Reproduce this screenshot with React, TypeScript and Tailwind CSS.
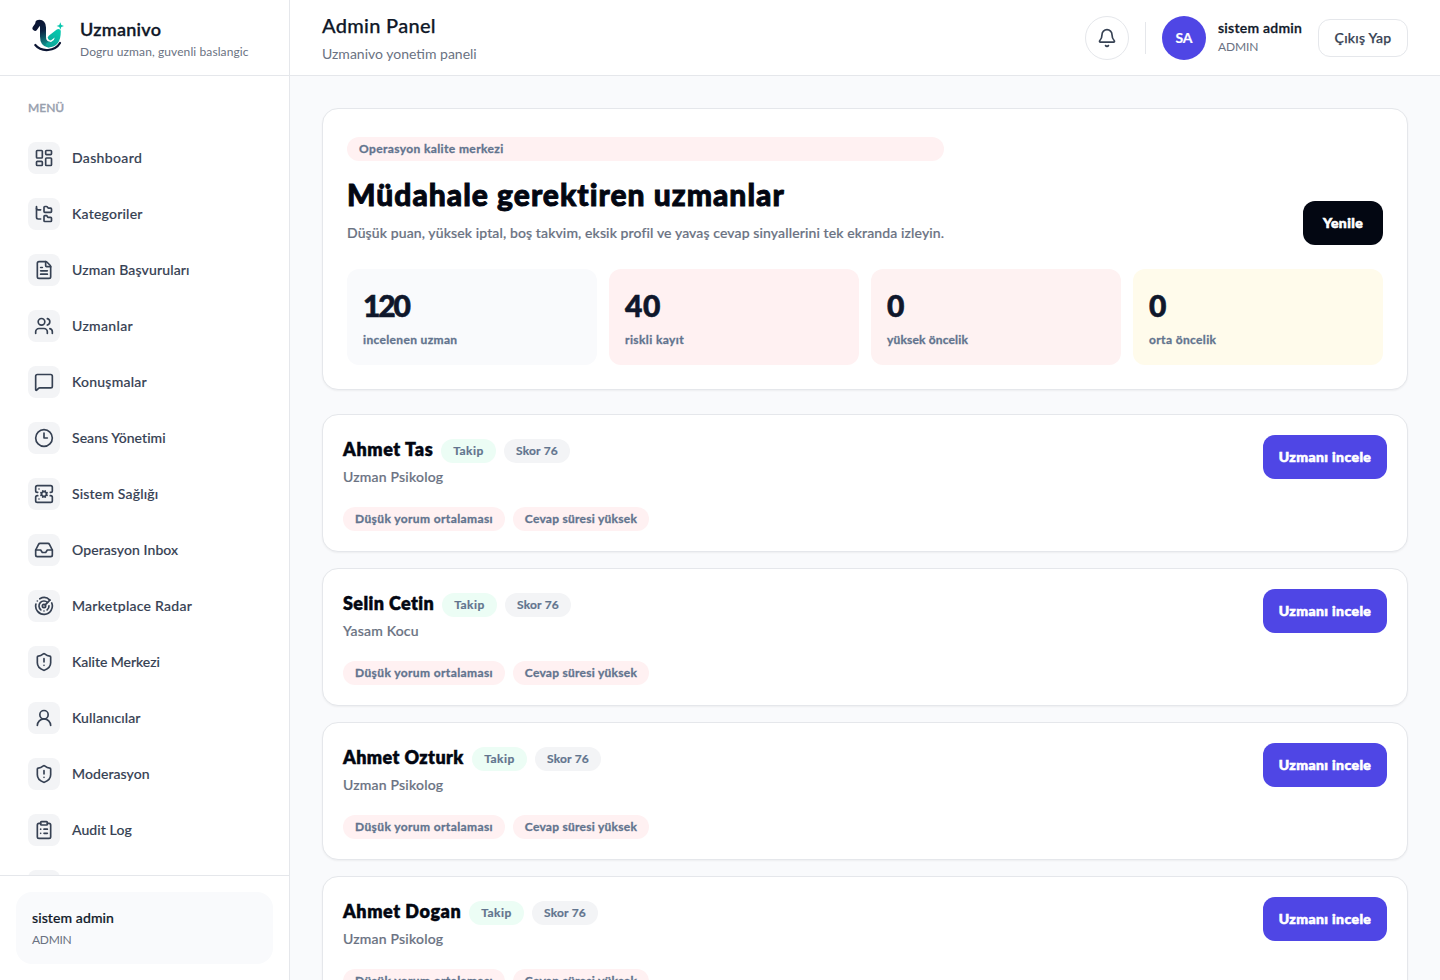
import {
	Bell,
	ClipboardList,
	Clock3,
	FileText,
	FolderTree,
	Inbox,
	LayoutDashboard,
	MessageSquare,
	Radar,
	ServerCog,
	ShieldAlert,
	UserRound,
	Users,
	type LucideIcon,
} from "lucide-react";

interface NavItem {
	label: string;
	icon: LucideIcon;
	tracking: string;
}

const NAV_ITEMS: NavItem[] = [
	{ label: "Dashboard", icon: LayoutDashboard, tracking: "tracking-[0.36px]" },
	{ label: "Kategoriler", icon: FolderTree, tracking: "tracking-[0.22px]" },
	{ label: "Uzman Başvuruları", icon: FileText, tracking: "tracking-[0.14px]" },
	{ label: "Uzmanlar", icon: Users, tracking: "tracking-[0.33px]" },
	{ label: "Konuşmalar", icon: MessageSquare, tracking: "tracking-[0.22px]" },
	{ label: "Seans Yönetimi", icon: Clock3, tracking: "tracking-[0.06px]" },
	{ label: "Sistem Sağlığı", icon: ServerCog, tracking: "tracking-[0.18px]" },
	{ label: "Operasyon Inbox", icon: Inbox, tracking: "tracking-[0.08px]" },
	{ label: "Marketplace Radar", icon: Radar, tracking: "tracking-[0.26px]" },
	{ label: "Kalite Merkezi", icon: ShieldAlert, tracking: "tracking-[-0.04px]" },
	{ label: "Kullanıcılar", icon: UserRound, tracking: "tracking-[0.1px]" },
	{ label: "Moderasyon", icon: ShieldAlert, tracking: "tracking-[0.08px]" },
	{ label: "Audit Log", icon: ClipboardList, tracking: "tracking-[0.08px]" },
];

const STATS = [
	{ value: "120", label: "incelenen uzman", tone: "bg-[#f9fafc]", valueTracking: "tracking-[-2.2px]", labelTracking: "tracking-[0.34px]" },
	{ value: "40", label: "riskli kayıt", tone: "bg-[#fff1f2]", valueTracking: "tracking-[0.5px]", labelTracking: "tracking-[0.4px]" },
	{ value: "0", label: "yüksek öncelik", tone: "bg-[#fef2f2]", valueTracking: "", labelTracking: "tracking-[0.16px]" },
	{ value: "0", label: "orta öncelik", tone: "bg-[#fffbeb]", valueTracking: "", labelTracking: "tracking-[0.36px]" },
];

const EXPERTS = [
	{ name: "Ahmet Tas", title: "Uzman Psikolog", nameStyle: "w-[90px] tracking-[0.6px]" },
	{ name: "Selin Cetin", title: "Yasam Kocu", nameStyle: "w-[91px] tracking-[0.4px]" },
	{ name: "Ahmet Ozturk", title: "Uzman Psikolog", nameStyle: "w-[121px] tracking-[0.4px]" },
	{ name: "Ahmet Dogan", title: "Uzman Psikolog", nameStyle: "w-[118px] tracking-[0.55px]" },
];

function Logo() {
	return (
		<svg viewBox="0 0 40 40" className="h-10 w-10 shrink-0" fill="none">
			<defs>
				<linearGradient id="neck" x1="10" y1="4" x2="20" y2="30" gradientUnits="userSpaceOnUse">
					<stop stopColor="#0b1533" />
					<stop offset="0.35" stopColor="#0b2343" />
					<stop offset="1" stopColor="#11a99c" />
				</linearGradient>
				<linearGradient id="wing" x1="32" y1="12" x2="18" y2="30" gradientUnits="userSpaceOnUse">
					<stop stopColor="#05cbb0" />
					<stop offset="1" stopColor="#0f9f96" />
				</linearGradient>
			</defs>
			<path d="M7 10.300L10 6" stroke="#0b1533" strokeWidth="5" strokeLinecap="round" />
			<path d="M10.500 5C13.500 4.200 15 6.500 15 9.500V18.500C15 24 17 26 20.500 26.500" stroke="url(#neck)" strokeWidth="6" strokeLinecap="round" />
			<path d="M20.500 26.700C27.500 26.700 30.300 22 30.300 13.500L22.300 19.800" stroke="url(#wing)" strokeWidth="5" strokeLinecap="round" strokeLinejoin="round" />
			<path d="M7.300 27C13.500 34.500 27 33.500 32 25" stroke="#0b1533" strokeWidth="2.200" strokeLinecap="round" />
			<path d="M32.300 4.300L33.300 7L36 8L33.300 9L32.300 11.700L31.300 9L28.600 8L31.300 7Z" fill="#08c7ae" />
		</svg>
	);
}

function Sidebar() {
	return (
		<aside className="flex h-full w-[290px] shrink-0 flex-col border-r border-gray-200 bg-white">
			<div className="flex h-[76px] shrink-0 items-center gap-3 border-b border-gray-200 px-7">
				<Logo />
				<div className="-mt-px">
					<p className="text-lg leading-7 font-semibold tracking-[0.25px] text-gray-900 [-webkit-text-stroke:0.3px]">Uzmanivo</p>
					<p className="mt-px text-xs leading-4 tracking-[0.1px] text-gray-500">Dogru uzman, guvenli baslangic</p>
				</div>
			</div>
			<div className="min-h-0 flex-1 overflow-hidden px-4 pt-6">
				<p className="px-3 text-xs leading-4 font-semibold text-gray-400 [-webkit-text-stroke:0.3px]">MENÜ</p>
				<nav className="mt-4 flex flex-col gap-1">
					{NAV_ITEMS.map(({ label, icon: Icon, tracking }) => (
						<a key={label} className="flex h-[52px] items-center gap-3 px-3 text-sm font-medium text-gray-700">
							<span className="flex h-8 w-8 items-center justify-center rounded-lg bg-gray-100">
								<Icon size={20} strokeWidth={2} />
							</span>
							<span className={`[-webkit-text-stroke:0.15px] ${tracking}`}>{label}</span>
						</a>
					))}
					<span className="mt-2.5 ml-3 h-8 w-8 rounded-lg bg-gray-100" />
				</nav>
			</div>
			<div className="shrink-0 border-t border-gray-200 p-4">
				<div className="h-[72px] rounded-2xl bg-[#f9fafc] px-4 pt-4">
					<p className="text-sm leading-5 font-medium tracking-[0.1px] text-gray-900 [-webkit-text-stroke:0.2px]">sistem admin</p>
					<p className="mt-1 text-xs leading-4 tracking-[-0.3px] text-gray-500">ADMIN</p>
				</div>
			</div>
		</aside>
	);
}

function Topbar() {
	return (
		<header className="flex h-[76px] shrink-0 items-center justify-between border-b border-gray-200 bg-white px-8">
			<div className="-mt-px">
				<h1 className="text-xl leading-7 font-medium tracking-[0.3px] text-gray-900 [-webkit-text-stroke:0.25px]">Admin Panel</h1>
				<p className="mt-[5px] text-sm leading-5 text-gray-500">Uzmanivo yonetim paneli</p>
			</div>
			<div className="flex items-center">
				<button className="flex h-11 w-11 items-center justify-center rounded-full border border-gray-200 text-gray-700">
					<Bell size={20} />
				</button>
				<span className="mx-4 h-8 w-px bg-gray-200" />
				<div className="flex h-11 w-11 items-center justify-center rounded-full bg-[#4f46e5] text-sm font-bold text-white [-webkit-text-stroke:0.2px]">SA</div>
				<div className="-mt-0.5 ml-3 w-[84px] whitespace-nowrap">
					<p className="text-sm leading-5 font-semibold tracking-[0.25px] text-gray-900 [-webkit-text-stroke:0.3px]">sistem admin</p>
					<p className="mt-px text-xs leading-4 tracking-[-0.15px] text-gray-500">ADMIN</p>
				</div>
				<button className="ml-4 h-[38px] w-[90px] rounded-xl border border-gray-200 text-sm font-medium tracking-[0.25px] whitespace-nowrap text-gray-700 [-webkit-text-stroke:0.25px]">
					Çıkış Yap
				</button>
			</div>
		</header>
	);
}

function Summary() {
	return (
		<section className="h-[282px] rounded-2xl border border-gray-200 bg-white px-6 pt-7 shadow-xs">
			<div className="flex items-end justify-between">
				<div className="w-[597px]">
					<span className="flex h-6 items-center rounded-full bg-[#fff1f2] px-3 text-xs font-bold tracking-[0.38px] text-slate-500 [-webkit-text-stroke:0.3px]">
						Operasyon kalite merkezi
					</span>
					<h2 className="mt-[15px] text-3xl leading-9 font-black tracking-[1.02px] whitespace-nowrap text-[#030712] [-webkit-text-stroke:0.9px]">
						Müdahale gerektiren uzmanlar
					</h2>
					<p className="mt-[9px] text-sm leading-6 font-medium tracking-[0.12px] whitespace-nowrap text-gray-500 [-webkit-text-stroke:0.2px]">
						Düşük puan, yüksek iptal, boş takvim, eksik profil ve yavaş cevap sinyallerini tek ekranda izleyin.
					</p>
				</div>
				<button className="h-11 w-20 rounded-xl bg-[#030712] text-sm font-black tracking-[0.4px] text-white [-webkit-text-stroke:0.6px]">Yenile</button>
			</div>
			<div className="mt-6 grid grid-cols-4 gap-3">
				{STATS.map((stat) => (
					<div key={stat.label} className={`h-24 rounded-xl px-4 pt-[15px] ${stat.tone}`}>
						<strong className={`block text-3xl leading-[42px] font-black text-slate-900 [-webkit-text-stroke:0.6px] ${stat.valueTracking}`}>{stat.value}</strong>
						<span className={`mt-[5px] block text-xs leading-[18px] font-bold text-slate-500 [-webkit-text-stroke:0.3px] ${stat.labelTracking}`}>{stat.label}</span>
					</div>
				))}
			</div>
		</section>
	);
}

export default function App() {
	return (
		<div className="flex h-[980px] w-full overflow-hidden bg-[#f9fafc] font-['Lato',sans-serif]">
			<Sidebar />
			<div className="flex min-w-0 flex-1 flex-col">
				<Topbar />
				<main className="min-h-0 flex-1 overflow-hidden p-8">
					<Summary />
					<div className="mt-6 flex flex-col gap-4">
						{EXPERTS.map((expert) => (
							<article key={expert.name} className="flex h-[138px] shrink-0 items-start justify-between rounded-2xl border border-gray-200 bg-white p-5 shadow-xs">
								<div>
									<div className="flex h-7 items-center gap-2">
										<h3 className={`text-lg leading-7 font-extrabold whitespace-nowrap text-[#030712] [-webkit-text-stroke:0.4px] ${expert.nameStyle}`}>
											{expert.name}
										</h3>
										<span className="mt-1 flex h-6 w-[55px] items-center justify-center rounded-full bg-[#ecfdf5] text-xs font-bold tracking-[0.5px] text-slate-500 [-webkit-text-stroke:0.2px]">
											Takip
										</span>
										<span className="mt-1 flex h-6 w-[66px] items-center justify-center rounded-full bg-gray-100 text-xs font-bold tracking-[0.2px] text-slate-500 [-webkit-text-stroke:0.2px]">
											Skor 76
										</span>
									</div>
									<p className="mt-1 text-sm leading-5 font-medium tracking-[0.2px] text-gray-500 [-webkit-text-stroke:0.2px]">{expert.title}</p>
									<div className="mt-5 flex gap-2">
										<span className="flex h-6 w-[162px] items-center justify-center rounded-full bg-[#fff1f2] text-xs font-bold tracking-[0.38px] text-slate-500 [-webkit-text-stroke:0.3px]">
											Düşük yorum ortalaması
										</span>
										<span className="flex h-6 w-[136px] items-center justify-center rounded-full bg-[#fff1f2] text-xs font-bold tracking-[0.26px] text-slate-500 [-webkit-text-stroke:0.3px]">
											Cevap süresi yüksek
										</span>
									</div>
								</div>
								<button className="h-11 w-[124px] rounded-xl bg-[#4f46e5] text-sm font-black tracking-[0.4px] whitespace-nowrap text-white [-webkit-text-stroke:0.6px]">
									Uzmanı incele
								</button>
							</article>
						))}
					</div>
				</main>
			</div>
		</div>
	);
}
